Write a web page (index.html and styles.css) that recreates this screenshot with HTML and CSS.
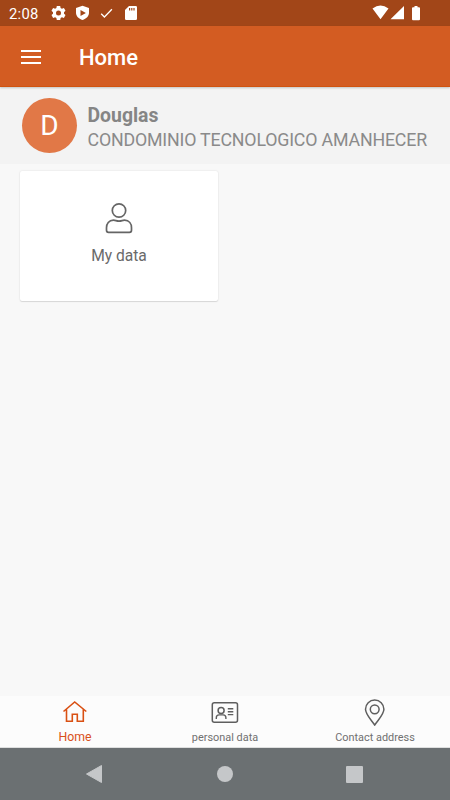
FILE: index.html
```html
<!DOCTYPE html>
<html lang="en">
<head>
<meta charset="utf-8">
<title>Home</title>
<link rel="stylesheet" href="styles.css">
</head>
<body>
<div class="screen">
  <div class="status">
    <span class="time">2:08</span>
    <svg class="status-left" width="92" height="26" viewBox="0 0 92 26" fill="#fff">
      <path fill-rule="evenodd" d="M6.800 6h3.400l.4 2 1.300.7 2-.7 1.600 2.800-1.500 1.400v1.500l1.500 1.400-1.600 2.800-2-.7-1.300.8-.4 2H6.800l-.4-2-1.300-.8-2 .7-1.600-2.800L3 13.700v-1.500l-1.500-1.400L3.100 8l2 .7L6.400 8zM8.500 10.600a2.500 2.500 0 1 0 0 5 2.500 2.500 0 0 0 0-5z"/>
      <path fill-rule="evenodd" d="M32.500 5.800 39 8v4.800c0 3.300-2.700 6-6.500 7.300-3.800-1.300-6.500-4-6.500-7.300V8zM30.500 9.900v6l5.400-3z"/>
      <path d="M51.200 13.800l3.200 3.200 7.500-7.700" fill="none" stroke="#fff" stroke-width="1.300"/>
      <path fill-rule="evenodd" d="M79 6h6.700q1.300 0 1.300 1.300v11.400q0 1.300-1.300 1.300h-9.400q-1.300 0-1.300-1.300V10zM79 8v2.500h1.200V8zm2.200 0v2.500h1.200V8zm2.200 0v2.500h1.200V8z"/>
    </svg>
    <svg class="status-right" width="52" height="26" viewBox="0 0 52 26" fill="#fff">
      <path d="M1.500 8.500Q9.500 2.300 17.500 8.500L9.500 19.200zM33 6v13.200H19.500zM43.500 6h3v1.200H48q1 0 1 1v11q0 1-1 1h-6q-1 0-1-1v-11q0-1 1-1h1.500z"/>
    </svg>
  </div>
  <header class="appbar">
    <svg width="20" height="14" viewBox="0 0 20 14"><path d="M0 1h20M0 7h20M0 13h20" stroke="#fff" stroke-width="2"/></svg>
    <h1>Home</h1>
  </header>
  <section class="profile">
    <div class="avatar"><span>D</span></div>
    <div class="identity">
      <div class="name">Douglas</div>
      <div class="condo">CONDOMINIO TECNOLOGICO AMANHECER</div>
    </div>
  </section>
  <main>
    <div class="card">
      <svg width="28" height="32" viewBox="0 0 28 32" fill="none" stroke="#656565" stroke-width="1.700"><circle cx="14" cy="8.500" r="6.700"/><path d="M8.500 18.200c-4.700 0-7 3.500-7 7.500v2.600q0 2 2 2h21q2 0 2-2v-2.600c0-4-2.300-7.500-7-7.500-2 0-3 .9-5.500.9s-3.500-.9-5.500-.9z"/></svg>
      <span>My data</span>
    </div>
  </main>
  <nav class="tabs">
    <div class="tab active">
      <svg width="28" height="28" viewBox="0 0 28 28" fill="none" stroke="#d95013" stroke-width="1.600"><path d="M2.500 13.500 13.700 4l11.600 9.500M5.500 11.500v11.700h5.800v-7h5v7h6V11.500"/></svg>
      <span class="home-label">Home</span>
    </div>
    <div class="tab">
      <svg width="28" height="28" viewBox="0 0 28 28" fill="none" stroke="#5e5e5e" stroke-width="1.500"><rect x="1.300" y="4.800" width="25.200" height="19.400" rx="2"/><circle cx="10.100" cy="12.400" r="3"/><path d="M5.300 21v-1.200c0-2 1.100-2.900 2.800-2.900h4c1.700 0 2.800.9 2.800 2.900V21M16.800 10.800h5.500M16.800 13.700h5.500M16.800 16.600h5.500" stroke-width="1.400"/></svg>
      <span>personal data</span>
    </div>
    <div class="tab">
      <svg width="28" height="28" viewBox="0 0 28 28" fill="none" stroke="#5e5e5e" stroke-width="1.500"><path d="M13.700 27C10.400 22 4.500 16.500 4.500 11.300a9.200 9.200 0 0 1 18.400 0C22.900 16.500 17 22 13.700 27z"/><circle cx="13.700" cy="11.300" r="4.400"/></svg>
      <span>Contact address</span>
    </div>
  </nav>
  <footer class="system">
    <svg width="18" height="20" viewBox="0 0 18 20"><path d="M1.500 10 16.500 1.500v17z" fill="#c5c7c9" stroke="#c5c7c9" stroke-linejoin="round"/></svg>
    <i class="circle"></i>
    <i class="square"></i>
  </footer>
</div>
</body>
</html>
```
FILE: styles.css
```css
* { box-sizing: border-box; }
body { margin: 0; font-family: Roboto, sans-serif; }
svg { display: block; flex: none; }
.screen { width: 450px; height: 800px; display: flex; flex-direction: column; background: #f8f8f8; overflow: hidden; }
.status { height: 26px; flex: none; display: flex; align-items: center; background: #a24618; color: #fff; padding: 0 27.5px 0 9px; }
.time { width: 40.500px; font-size: 14.8px; line-height: 26px; letter-spacing: .25px; padding-top: 2px; }
.status-right { margin-left: auto; }
.appbar { height: 61px; flex: none; display: flex; align-items: center; padding: 0 21px; background: #d35c22; border-bottom: 1px solid #d0530f; box-shadow: 0 1px 2px rgba(0,0,0,.2); position: relative; }
.appbar svg { margin-top: 1px; }
h1 { margin: 3px 0 0 38px; color: #fff; font-size: 22px; font-weight: 500; line-height: 28px; }
.profile { height: 77px; flex: none; display: flex; align-items: center; padding: 0 0 0 22px; background: #f3f3f3; }
.avatar { width: 55px; height: 55px; border-radius: 50%; background: #e17847; color: #fff; display: flex; align-items: center; justify-content: center; font-size: 28px; }
.identity { margin-left: 10.5px; padding-top: 4px; color: #858585; white-space: nowrap; }
.name { font-size: 19.4px; line-height: 25px; font-weight: 700; }
.condo { font-size: 17.8px; line-height: 24px; letter-spacing: -.18px; color: #8a8a8a; }
main { flex: 1; padding: 7px 20px; }
.card { width: 198px; height: 130px; display: flex; flex-direction: column; align-items: center; padding-top: 31px; border-radius: 2px; background: #fff; box-shadow: 0 0 2px rgba(0,0,0,.12), 0 1px 1px rgba(0,0,0,.1); }
.card span { margin-top: 12px; font-size: 15.6px; line-height: 20px; color: #6a6a6a; }
.tabs { height: 52px; flex: none; display: grid; grid-template-columns: repeat(3, 1fr); background: #fcfcfc; border-bottom: 1px solid #dedfdf; }
.tab { display: flex; flex-direction: column; align-items: center; padding-top: 2px; color: #707070; font-size: 10.9px; line-height: 16px; white-space: nowrap; }
.tab span { margin-top: 4px; }
.tab.active { color: #d9501b; }
.tab .home-label { font-size: 12.3px; margin-top: 3px; }
.system { height: 52px; flex: none; display: flex; align-items: center; background: #6b7072; padding-left: 85px; }
.circle { width: 16px; height: 16px; border-radius: 50%; background: #c5c7c9; margin-left: 114px; }
.square { width: 17px; height: 17px; border-radius: 1px; background: #c5c7c9; margin-left: 113px; }
```
